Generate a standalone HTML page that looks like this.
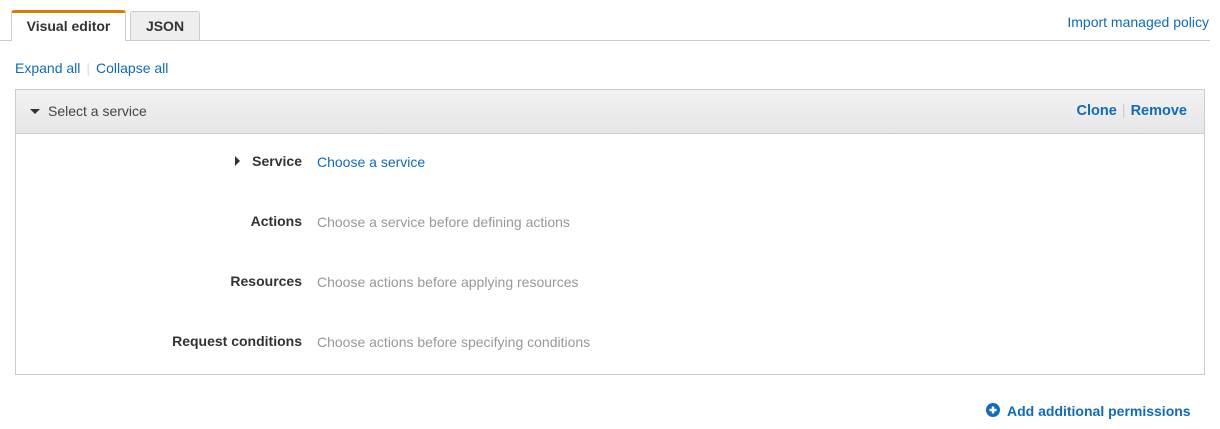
<html><head><style>
body{margin:0;width:1220px;height:429px;background:#fff;font-family:"Liberation Sans",sans-serif;font-size:14px;color:#444;position:relative;overflow:hidden}
.a{position:absolute}
.link{color:#0f6bbd}
.tab{position:absolute;top:10px;height:30px;box-sizing:border-box;border:1px solid #ccc;border-bottom:none;border-radius:3px 3px 0 0;font-weight:bold;font-size:14px;color:#333;text-align:center;line-height:30px}
.lab{position:absolute;right:918px;font-weight:bold;color:#333}
.val{position:absolute;left:317px;color:#999}
</style></head><body>
<div class="a" style="left:0;top:40px;width:1210px;height:1px;background:#ccc"></div>
<div class="tab" style="left:11px;width:115px;height:31px;background:#fff;border-top:3px solid #e07b00;line-height:27px">Visual editor</div>
<div class="tab" style="left:130px;width:70px;top:11px;height:29px;background:#eee;line-height:29px">JSON</div>
<div class="a link" style="right:11px;top:14px">Import managed policy</div>
<div class="a" style="left:15px;top:60px"><span class="link">Expand all</span><span style="color:#ddd;margin:0 6px">|</span><span class="link">Collapse all</span></div>
<div class="a" style="left:15px;top:89px;width:1190px;height:286px;box-sizing:border-box;border:1px solid #ccc"></div>
<div class="a" style="left:16px;top:90px;width:1188px;height:43px;background:linear-gradient(#f2f2f2,#e6e6e6);border-bottom:1px solid #ccc"></div>
<div class="a" style="left:30px;top:109px;width:0;height:0;border-left:5px solid transparent;border-right:5px solid transparent;border-top:5px solid #333"></div>
<div class="a" style="left:48px;top:103px;color:#444">Select a service</div>
<div class="a" style="right:33px;top:103px;font-weight:bold;font-size:14.5px"><span class="link">Clone</span><span style="color:#ccc;margin:0 5px;font-weight:normal">|</span><span class="link">Remove</span></div>
<div class="a" style="left:235px;top:156px;width:0;height:0;border-top:5px solid transparent;border-bottom:5px solid transparent;border-left:5px solid #333"></div>
<div class="lab" style="top:153px">Service</div><div class="val link" style="top:154px;color:#0f6bbd">Choose a service</div>
<div class="lab" style="top:213px">Actions</div><div class="val" style="top:214px">Choose a service before defining actions</div>
<div class="lab" style="top:273px">Resources</div><div class="val" style="top:274px">Choose actions before applying resources</div>
<div class="lab" style="top:333px">Request conditions</div><div class="val" style="top:334px">Choose actions before specifying conditions</div>
<svg class="a" style="left:986px;top:403px" width="14" height="14" viewBox="0 0 14 14"><circle cx="7" cy="7" r="7" fill="#0f6bbd"/><path d="M7 3.5v7M3.5 7h7" stroke="#fff" stroke-width="2.4"/></svg>
<div class="a link" style="left:1007px;top:403px;font-weight:bold">Add additional permissions</div>
</body></html>
